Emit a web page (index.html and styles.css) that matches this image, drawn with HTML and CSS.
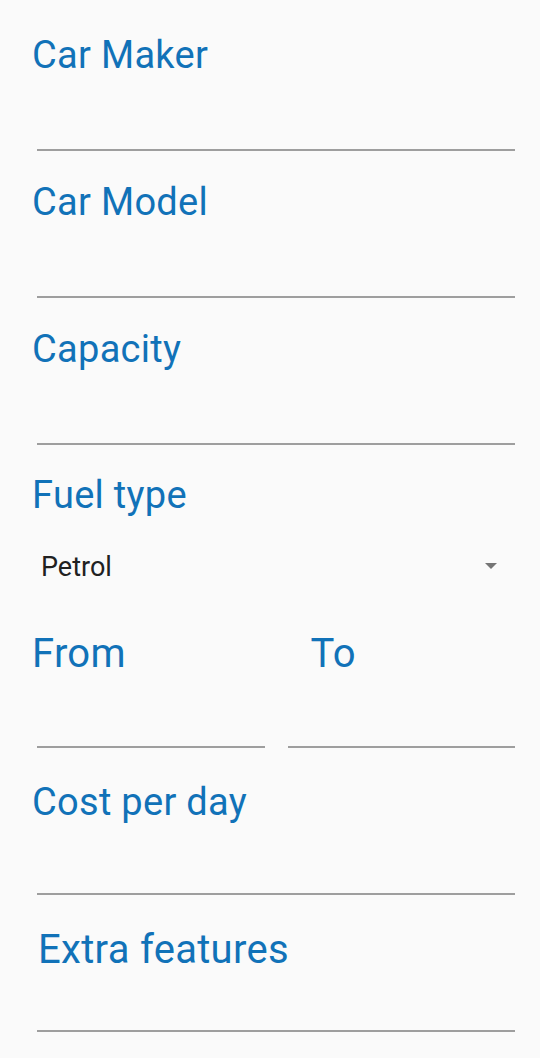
FILE: index.html
```html
<!DOCTYPE html>
<html>
<head>
<meta charset="utf-8">
<link rel="stylesheet" href="styles.css">
</head>
<body>
<div class="form">
  <div class="field field-first">
    <div class="label">Car Maker</div>
    <div class="input h73"></div>
  </div>
  <div class="field">
    <div class="label">Car Model</div>
    <div class="input h73"></div>
  </div>
  <div class="field">
    <div class="label">Capacity</div>
    <div class="input h73"></div>
  </div>
  <div class="field field-fuel">
    <div class="label">Fuel type</div>
    <div class="spinner">
      <span class="spinner-value">Petrol</span>
      <svg class="arrow" width="12" height="6" viewBox="0 0 12 6"><path d="M0 0 L12 0 L6 6 Z" fill="#757575"/></svg>
    </div>
  </div>
  <div class="range">
    <div class="field">
      <div class="label label-big">From</div>
      <div class="input h71"></div>
    </div>
    <div class="field">
      <div class="label label-big label-to">To</div>
      <div class="input h71"></div>
    </div>
  </div>
  <div class="field field-cost">
    <div class="label">Cost per day</div>
    <div class="input h70"></div>
  </div>
  <div class="field field-extra">
    <div class="label label-big label-extra">Extra features</div>
    <div class="input h59"></div>
  </div>
</div>
</body>
</html>
```

FILE: styles.css
```css
html, body {
  margin: 0;
  padding: 0;
  background: #fafafa;
}
body {
  width: 540px;
  height: 1058px;
  overflow: hidden;
  font-family: Roboto, "Noto Sans", sans-serif;
}
.form {
  display: flex;
  flex-direction: column;
  padding: 0 25px 0 37px;
}
.field {
  display: flex;
  flex-direction: column;
  margin-top: 30px;
}
.field-first {
  margin-top: 34px;
}
.field-fuel {
  margin-top: 29px;
}
.field-cost {
  margin-top: 33px;
}
.field-extra {
  margin-top: 34px;
}
.label {
  font-size: 38px;
  line-height: 42px;
  letter-spacing: 0.3px;
  color: #1172b8;
  margin-left: -5px;
  white-space: nowrap;
}
.label-big {
  font-size: 40px;
}
.label-to {
  margin-left: 23px;
}
.label-extra {
  margin-left: 1px;
}
.input {
  border-bottom: 2px solid #9e9e9e;
}
.h73 { height: 73px; }
.h71 { height: 71px; }
.h70 { height: 70px; }
.h59 { height: 59px; }
.spinner {
  display: flex;
  align-items: center;
  justify-content: space-between;
  height: 30px;
  margin-top: 36px;
  padding-left: 4px;
  padding-right: 18px;
}
.spinner-value {
  font-size: 27px;
  line-height: 30px;
  color: #212121;
}
.arrow {
  display: block;
  margin-top: -3px;
}
.range {
  display: grid;
  grid-template-columns: 1fr 1fr;
  column-gap: 23px;
}
.range .field {
  margin-top: 51px;
}
```
